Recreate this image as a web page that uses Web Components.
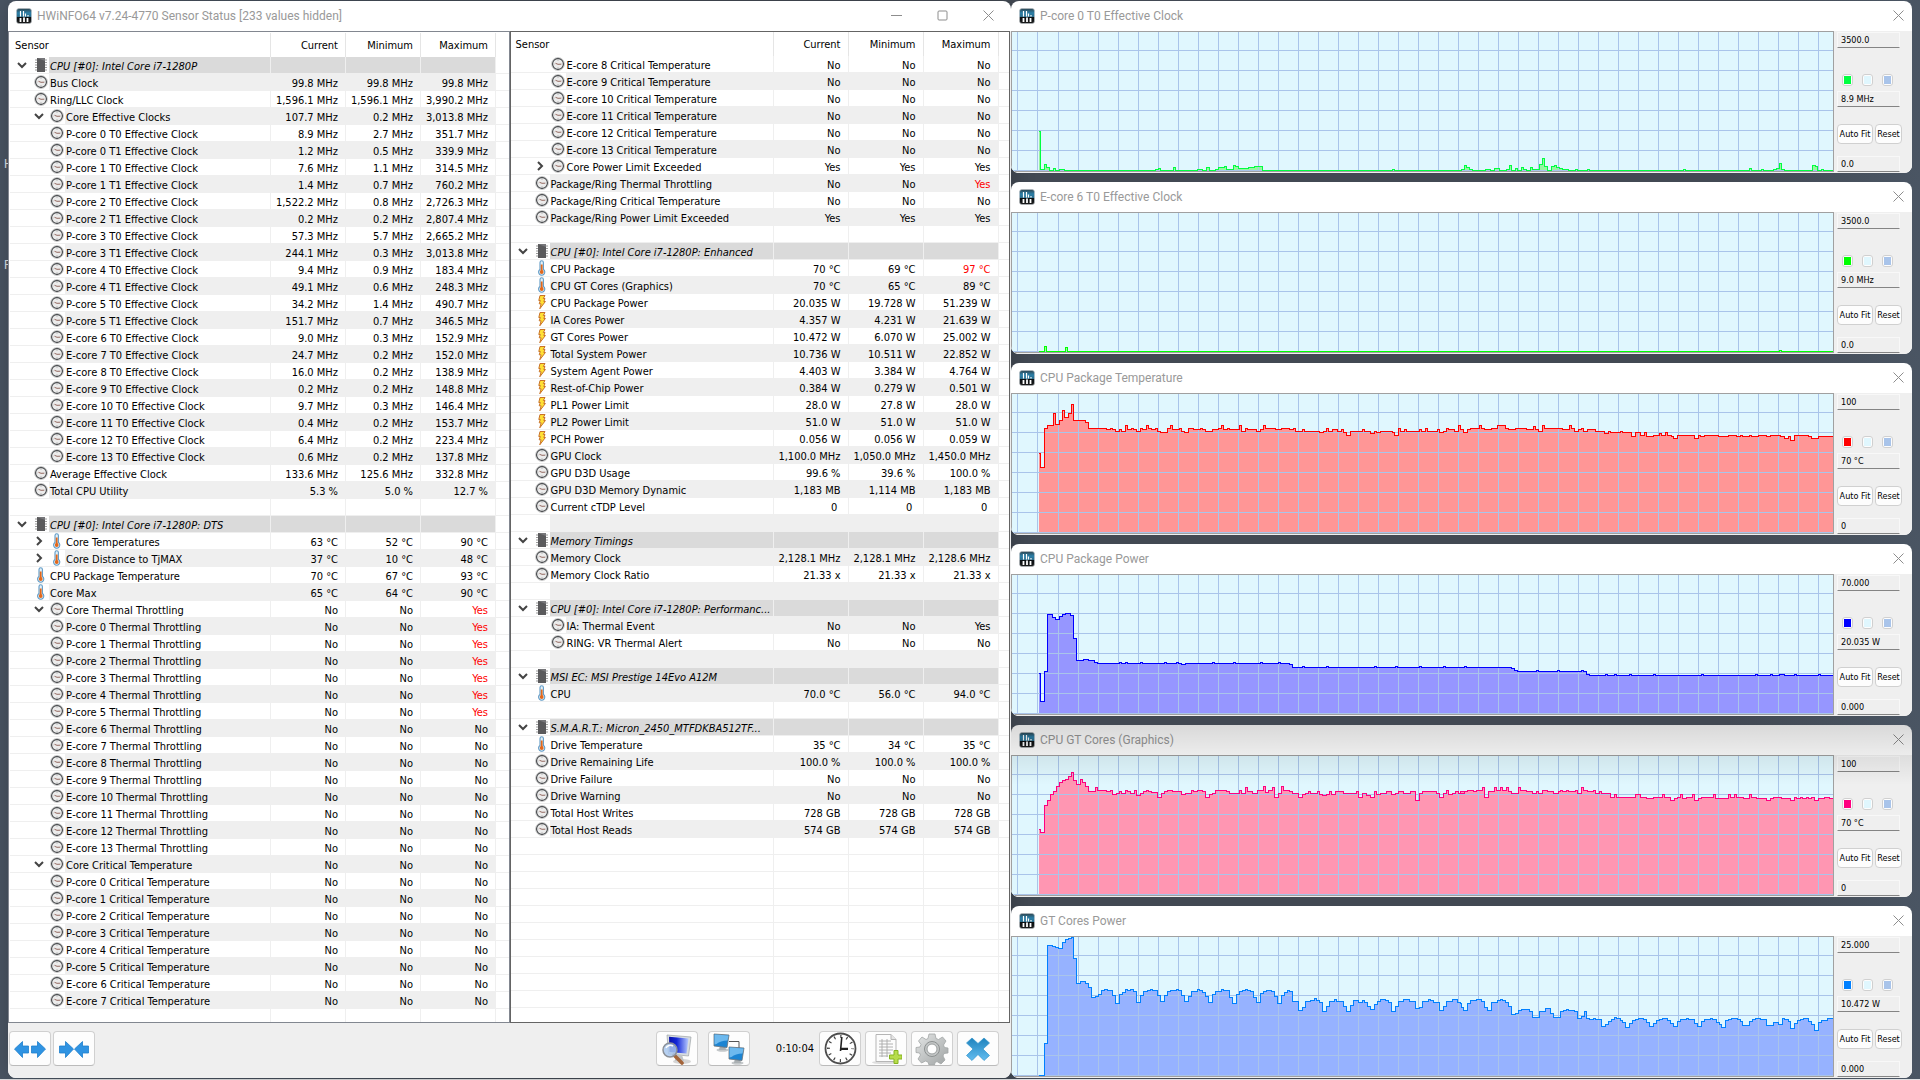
<!DOCTYPE html>
<html lang="en">
<head>
<meta charset="utf-8">
<title>HWiNFO64 Sensor Status</title>
<style>
  body { margin: 0; height: 100vh; display: flex; background: #46505c; }
  desktop-view { flex: 1; }
</style>
</head>
<body>
<desktop-view></desktop-view>

<script>
/* ---------- shared drawings ---------- */
const LOGO = `<svg width="16" height="16" viewBox="0 0 16 16" aria-hidden="true">
  <defs><linearGradient id="g" x1="0" y1="0" x2="0" y2="1"><stop offset="0" stop-color="#2f444e"/><stop offset=".3" stop-color="#2b7fa8"/><stop offset=".55" stop-color="#2b6d8c"/><stop offset=".58" stop-color="#0a0f12"/><stop offset="1" stop-color="#1c1c1c"/></linearGradient></defs>
  <rect x=".5" y=".5" width="15" height="15" rx="2.5" fill="url(#g)" stroke="#b9c0c4" stroke-width=".6"/>
  <path d="M4.500 3v5.500M7.500 3v5.500M9.500 5.500v3M12 7v1.500" stroke="#fff" stroke-width="1.200"/>
  <path d="M4.500 10v4M8 9.500v4.500M11.500 10v4" stroke="#fff" stroke-width="1.800"/></svg>`;

const ICONS = {
  clock: `<svg width="14" height="14" viewBox="0 0 14 14"><circle cx="7" cy="7" r="5.500" fill="#ececec" stroke="#4a4d50" stroke-width="1.300"/><circle cx="7" cy="7" r="6.500" fill="none" stroke="#bdbdbd" stroke-width=".7"/><path d="M4.500 6.300L7 7.300L10.200 7.200" fill="none" stroke="#8a5a50" stroke-width=".9"/><path d="M7 3v1M7 10v1M3 7h.6M10.500 7h.6" stroke="#aaa" stroke-width=".7"/></svg>`,
  temp: `<svg width="14" height="16" viewBox="0 0 14 16"><path d="M5 2.500a1.700 1.700 0 0 1 3.400 0v7a3.100 3.100 0 1 1-3.400 0z" fill="#e3f0f8" stroke="#5f9ac6" stroke-width="1.100"/><path d="M6.700 4.500v7" stroke="#e2681c" stroke-width="1.800"/><circle cx="6.700" cy="12" r="1.900" fill="#e2681c"/></svg>`,
  power: `<svg width="14" height="16" viewBox="0 0 14 16"><path d="M5 1.500h5l-1.700 3H10L8.800 7.500h1.600L4.800 14.800l1.300-5H4.200L5.300 6.500H3.800z" fill="#ffe034" stroke="#c9722a" stroke-width="1"/></svg>`,
  chip: `<svg width="14" height="16" viewBox="0 0 14 16"><path d="M1 3h12M1 5.500h12M1 8h12M1 10.500h12M1 13h12" stroke="#9a9a9a" stroke-width="1"/><rect x="3" y="1" width="8" height="14" fill="#5a5a5c"/><path d="M3 1h8v3z" fill="#77777a"/></svg>`,
  open: `<svg width="10" height="8" viewBox="0 0 10 8"><path d="M1 2l4 4 4-4" fill="none" stroke="#444" stroke-width="2"/></svg>`,
  shut: `<svg width="10" height="10" viewBox="0 0 10 10"><path d="M3 1l4 4-4 4" fill="none" stroke="#444" stroke-width="2"/></svg>`
};

/* ---------- sensor rows: kind|label|current|minimum|maximum
   kind: H group header, 1 item, 2 nested item, O open group, S shut group, - spacer;
   followed by the icon letter c(lock) t(emp) p(ower).  "!" marks an alarm value. ---------- */
const ICON_OF = { c: 'clock', t: 'temp', p: 'power' };
const M = (label, c, mi, ma) => `2c|${label} Effective Clock|${c} MHz|${mi} MHz|${ma} MHz`;
const LEFT = [
  'H|CPU [#0]: Intel Core i7-1280P',
  '1c|Bus Clock|99.8 MHz|99.8 MHz|99.8 MHz',
  '1c|Ring/LLC Clock|1,596.1 MHz|1,596.1 MHz|3,990.2 MHz',
  'Oc|Core Effective Clocks|107.7 MHz|0.2 MHz|3,013.8 MHz',
  M('P-core 0 T0', '8.9', '2.7', '351.7'), M('P-core 0 T1', '1.2', '0.5', '339.9'),
  M('P-core 1 T0', '7.6', '1.1', '314.5'), M('P-core 1 T1', '1.4', '0.7', '760.2'),
  M('P-core 2 T0', '1,522.2', '0.8', '2,726.3'), M('P-core 2 T1', '0.2', '0.2', '2,807.4'),
  M('P-core 3 T0', '57.3', '5.7', '2,665.2'), M('P-core 3 T1', '244.1', '0.3', '3,013.8'),
  M('P-core 4 T0', '9.4', '0.9', '183.4'), M('P-core 4 T1', '49.1', '0.6', '248.3'),
  M('P-core 5 T0', '34.2', '1.4', '490.7'), M('P-core 5 T1', '151.7', '0.7', '346.5'),
  M('E-core 6 T0', '9.0', '0.3', '152.9'), M('E-core 7 T0', '24.7', '0.2', '152.0'),
  M('E-core 8 T0', '16.0', '0.2', '138.9'), M('E-core 9 T0', '0.2', '0.2', '148.8'),
  M('E-core 10 T0', '9.7', '0.3', '146.4'), M('E-core 11 T0', '0.4', '0.2', '153.7'),
  M('E-core 12 T0', '6.4', '0.2', '223.4'), M('E-core 13 T0', '0.6', '0.2', '137.8'),
  '1c|Average Effective Clock|133.6 MHz|125.6 MHz|332.8 MHz',
  '1c|Total CPU Utility|5.3 %|5.0 %|12.7 %',
  '-',
  'H|CPU [#0]: Intel Core i7-1280P: DTS',
  'St|Core Temperatures|63 °C|52 °C|90 °C',
  'St|Core Distance to TjMAX|37 °C|10 °C|48 °C',
  '1t|CPU Package Temperature|70 °C|67 °C|93 °C',
  '1t|Core Max|65 °C|64 °C|90 °C',
  'Oc|Core Thermal Throttling|No|No|!Yes',
  ...[0, 1, 2, 3, 4, 5].map(n => `2c|P-core ${n} Thermal Throttling|No|No|!Yes`),
  ...[6, 7, 8, 9, 10, 11, 12, 13].map(n => `2c|E-core ${n} Thermal Throttling|No|No|No`),
  'Oc|Core Critical Temperature|No|No|No',
  ...[0, 1, 2, 3, 4, 5].map(n => `2c|P-core ${n} Critical Temperature|No|No|No`),
  ...[6, 7].map(n => `2c|E-core ${n} Critical Temperature|No|No|No`)
];
const RIGHT = [
  ...[8, 9, 10, 11, 12, 13].map(n => `2c|E-core ${n} Critical Temperature|No|No|No`),
  'Sc|Core Power Limit Exceeded|Yes|Yes|Yes',
  '1c|Package/Ring Thermal Throttling|No|No|!Yes',
  '1c|Package/Ring Critical Temperature|No|No|No',
  '1c|Package/Ring Power Limit Exceeded|Yes|Yes|Yes',
  '-',
  'H|CPU [#0]: Intel Core i7-1280P: Enhanced',
  '1t|CPU Package|70 °C|69 °C|!97 °C',
  '1t|CPU GT Cores (Graphics)|70 °C|65 °C|89 °C',
  '1p|CPU Package Power|20.035 W|19.728 W|51.239 W',
  '1p|IA Cores Power|4.357 W|4.231 W|21.639 W',
  '1p|GT Cores Power|10.472 W|6.070 W|25.002 W',
  '1p|Total System Power|10.736 W|10.511 W|22.852 W',
  '1p|System Agent Power|4.403 W|3.384 W|4.764 W',
  '1p|Rest-of-Chip Power|0.384 W|0.279 W|0.501 W',
  '1p|PL1 Power Limit|28.0 W|27.8 W|28.0 W',
  '1p|PL2 Power Limit|51.0 W|51.0 W|51.0 W',
  '1p|PCH Power|0.056 W|0.056 W|0.059 W',
  '1c|GPU Clock|1,100.0 MHz|1,050.0 MHz|1,450.0 MHz',
  '1c|GPU D3D Usage|99.6 %|39.6 %|100.0 %',
  '1c|GPU D3D Memory Dynamic|1,183 MB|1,114 MB|1,183 MB',
  '1c|Current cTDP Level|0&nbsp;|0&nbsp;|0&nbsp;',
  '-',
  'H|Memory Timings',
  '1c|Memory Clock|2,128.1 MHz|2,128.1 MHz|2,128.6 MHz',
  '1c|Memory Clock Ratio|21.33 x|21.33 x|21.33 x',
  '-',
  'H|CPU [#0]: Intel Core i7-1280P: Performanc...',
  '2c|IA: Thermal Event|No|No|Yes',
  '2c|RING: VR Thermal Alert|No|No|No',
  '-',
  'H|MSI EC: MSI Prestige 14Evo A12M',
  '1t|CPU|70.0 °C|56.0 °C|94.0 °C',
  '-',
  'H|S.M.A.R.T.: Micron_2450_MTFDKBA512TF...',
  '1t|Drive Temperature|35 °C|34 °C|35 °C',
  '1c|Drive Remaining Life|100.0 %|100.0 %|100.0 %',
  '1c|Drive Failure|No|No|No',
  '1c|Drive Warning|No|No|No',
  '1c|Total Host Writes|728 GB|728 GB|728 GB',
  '1c|Total Host Reads|574 GB|574 GB|574 GB'
];

/* ---------- graphs ----------
   A trace is a list of "x,y" steps, three units to the pixel, in two pages;
   page two starts PAGE units after page one. "top" is the y of the plot's top edge. */
const PAGE = 1350;
const GRAPHS = [
  { title: 'P-core 0 T0 Effective Clock', max: '3500.0', now: '8.9 MHz', min: '0.0', color: '#00ff40', fill: '#96f5a0', top: 96,
    a: '84,394 92,508 103,493 110,502 119,511 130,505 137,511 147,508 164,511 436,508 445,505 452,511 489,502 497,511 562,508 577,511 589,502 597,511 616,508 625,502 643,499 650,508 670,496 677,499 685,505 715,502 733,499 758,511 1146,508 1154,511',
    b: '3,508 13,496 20,502 28,508 38,511 76,508 92,511 102,505 119,511 138,508 148,496 155,511 166,505 173,511 184,502 191,508 200,511 211,502 218,508 238,493 247,475 254,499 262,511 274,499 283,496 290,502 299,505 308,508 326,511 346,508 353,511 382,508 389,511 669,508 677,511 868,505 875,511 904,508 911,511 940,508 949,505 957,490 965,508 974,511 1057,496 1065,499 1073,511 1083,508 1091,511' },
  { title: 'E-core 6 T0 Effective Clock', max: '3500.0', now: '9.0 MHz', min: '0.0', color: '#00ff00', fill: '#96ff96', top: 639,
    a: '84,1054 103,1039 110,1054 166,1042 173,1054', b: '958,1051 965,1054' },
  { title: 'CPU Package Temperature', max: '100', now: '70 °C', min: '0', color: '#ff0000', fill: '#ff9696', top: 102,
    a: '84,280 92,322 103,205 112,196 130,160 137,193 148,181 157,151 164,172 175,160 184,133 190,181 226,187 235,205 289,208 301,205 307,208 316,214 328,208 334,214 346,196 353,208 364,205 370,208 379,214 391,205 397,208 409,196 415,205 424,208 436,205 442,214 451,217 472,205 481,196 488,208 508,205 514,214 523,217 535,205 550,208 571,205 577,208 586,214 607,208 625,205 634,196 641,208 652,205 658,208 688,196 694,214 706,205 712,208 739,214 751,208 760,196 767,205 796,208 814,205 838,208 850,205 857,214 877,208 883,214 928,217 940,214 949,205 956,214 967,208 983,214 994,208 1001,217 1009,226 1021,214 1057,208 1064,214 1081,220 1093,214 1099,217 1111,214 1148,217 1153,226 1165,205 1171,214 1183,208 1190,214 1228,208 1235,214 1246,205 1253,214 1282,208 1288,217 1300,214 1309,205 1316,208 1333,214 1345,196',
    b: '2,208 10,217 22,208 31,205 58,196 65,205 73,208 95,205 112,196 137,205 146,208 166,205 200,208 220,199 227,208 235,214 247,196 254,205 307,208 328,196 335,205 343,214 355,208 364,205 371,214 382,208 406,214 433,220 445,214 451,217 481,214 487,217 515,229 527,217 541,226 553,217 560,229 581,226 598,220 604,226 616,217 623,226 634,229 641,235 652,226 703,235 715,226 721,229 733,226 776,229 806,226 829,229 841,226 847,229 868,226 874,229 895,226 919,229 931,226 961,229 973,235 985,229 991,241 1003,226 1046,229 1055,235 1076,229' },
  { title: 'CPU Package Power', max: '70.000', now: '20.035 W', min: '0.000', color: '#0000ff', fill: '#9696ff', top: 645,
    a: '84,940 92,1024 103,934 112,763 127,772 136,778 148,769 157,763 166,760 181,766 190,835 199,901 220,898 235,901 253,907 262,910 328,907 335,910 346,907 353,910 391,907 397,910 463,907 469,910 499,907 505,910 514,913 526,910 607,907 613,910 670,907 676,910 751,907 757,910 805,907 811,910 838,913 847,922 877,919 883,922 949,919 955,922 1093,919 1099,922 1156,919 1162,922 1228,919 1234,922 1300,919 1306,922',
    b: '13,919 19,922 155,925 164,931 173,934 229,931 235,934 292,931 298,934 364,931 370,934 379,943 388,946 436,943 442,946 463,943 469,946 508,943 514,946 580,943 586,946 724,943 730,946 886,943 892,946 931,943 937,946 958,943 973,946 1003,943 1009,946 1075,943 1081,946' },
  { title: 'CPU GT Cores (Graphics)', max: '100', now: '70 °C', min: '0', color: '#ff0080', fill: '#ff96b2', top: 108, shaded: true,
    a: '84,328 92,337 103,256 112,241 121,223 130,214 139,199 148,187 157,181 166,178 175,169 184,157 191,181 200,193 211,178 218,187 226,199 235,214 256,202 263,211 289,214 301,211 307,223 319,220 328,214 334,220 346,211 353,214 361,220 373,211 380,226 391,220 400,214 409,211 415,214 424,217 442,232 454,220 463,214 472,211 487,214 514,223 526,220 544,211 550,214 562,211 577,214 586,232 598,223 607,220 616,211 649,214 658,220 688,211 694,220 706,202 713,214 727,220 742,211 760,199 767,217 776,211 787,202 794,232 805,220 814,199 821,211 838,214 847,220 865,232 877,223 886,220 895,214 901,220 922,214 928,223 937,226 949,223 958,214 964,223 976,214 1000,220 1039,214 1045,232 1057,220 1069,226 1081,232 1093,214 1099,223 1111,220 1129,214 1144,223 1156,220 1165,214 1180,220 1201,214 1216,241 1228,220 1237,214 1279,220 1288,232 1300,220 1309,211 1315,223 1327,220 1336,214 1345,220 1363,214',
    b: '0,220 13,214 22,211 40,214 49,211 67,202 74,232 86,214 103,202 110,211 121,202 128,211 139,202 146,214 155,220 175,202 182,211 200,214 218,220 229,214 235,220 247,211 263,214 280,220 295,214 301,211 307,214 319,211 325,214 346,211 353,220 364,202 371,211 382,214 400,211 406,220 418,214 424,220 451,232 463,223 469,232 526,223 541,232 559,235 580,232 607,223 613,232 631,241 643,235 652,232 661,223 668,235 679,232 697,223 704,241 715,235 724,232 760,223 767,235 805,223 812,232 823,223 829,232 850,235 868,223 875,232 889,235 919,241 931,235 940,232 964,235 991,241 1003,232 1010,235 1021,232 1027,235 1039,232 1045,235 1054,232 1063,241 1075,235 1093,232 1108,235' },
  { title: 'GT Cores Power', max: '25.000', now: '10.472 W', min: '0.000', color: '#0080ff', fill: '#96b2ff', top: 651,
    a: '84,1066 103,970 112,676 127,679 136,682 145,685 157,667 166,658 175,655 184,652 190,715 199,790 211,784 226,790 235,802 244,832 256,829 265,823 274,811 283,808 292,811 307,826 316,850 328,823 337,817 346,808 352,811 361,808 370,814 379,847 391,826 400,814 412,811 421,808 427,811 442,826 451,844 463,826 472,814 481,811 499,808 505,811 514,826 523,844 535,829 544,814 562,808 569,811 577,817 586,829 595,847 607,823 616,814 634,808 640,811 658,832 667,850 679,823 688,814 697,811 706,808 712,811 721,814 730,832 739,847 751,820 760,814 769,811 784,814 793,829 802,850 814,826 823,817 832,811 838,814 847,844 865,871 877,862 886,844 901,841 913,835 919,841 928,847 937,874 949,859 958,844 973,838 979,844 1000,859 1009,874 1021,856 1030,841 1045,847 1057,841 1063,847 1072,859 1081,868 1093,853 1102,844 1111,838 1126,841 1135,847 1144,874 1156,859 1165,844 1180,838 1198,844 1216,865 1228,862 1237,844 1255,838 1261,841 1270,847 1288,871 1300,859 1309,844 1327,838 1342,847',
    b: '0,850 4,862 10,871 22,850 31,841 49,838 65,844 73,862 82,871 94,847 112,841 121,838 128,841 137,847 146,859 155,883 166,880 175,871 184,868 209,874 218,892 238,874 256,865 271,880 281,892 301,874 310,871 319,868 325,871 343,874 352,895 365,889 373,874 379,895 388,898 400,895 406,898 424,919 436,913 445,904 454,898 463,892 469,895 481,901 487,907 496,922 508,910 517,901 526,898 535,895 550,898 559,907 568,919 580,910 589,901 598,898 607,895 622,901 631,910 640,919 652,904 661,898 679,895 685,898 703,910 712,919 724,904 733,898 751,895 757,898 769,907 778,913 784,922 796,901 805,898 814,895 832,898 841,904 847,916 868,904 877,898 886,895 901,898 919,916 940,907 955,913 967,895 973,898 985,904 991,925 1003,910 1012,901 1021,898 1030,895 1045,904 1054,913 1063,931 1075,907 1084,901 1102,895' }
];

const UI_FONT = '"DejaVu Sans Condensed", "DejaVu Sans", sans-serif';
const TITLE_FONT = 'Roboto, "Noto Sans", sans-serif';

class BaseElement extends HTMLElement {
  render(css, html) {
    const t = document.createElement('template');
    t.innerHTML = `<style>*{box-sizing:border-box}:host{box-sizing:border-box}${css}</style>${html}`;
    this.attachShadow({ mode: 'open' }).append(t.content.cloneNode(true));
  }
}

/* A window: title bar, optional minimise/maximise buttons, slotted body */
customElements.define('app-window', class extends BaseElement {
  connectedCallback() {
    const extra = this.hasAttribute('resizable') ? `
      <button aria-label="Minimise"><svg width="11" height="11" viewBox="0 0 11 11"><path d="M0 5.500h11"/></svg></button>
      <button aria-label="Maximise"><svg width="11" height="11" viewBox="0 0 11 11"><rect x="1" y="1" width="9" height="9" rx="1"/></svg></button>` : '';
    this.render(`
      :host{display:flex;flex-direction:column;min-width:0;min-height:0;border-radius:8px;overflow:hidden;background:#fff;font:12px/16px ${TITLE_FONT}}
      header{flex:none;display:flex;align-items:center;height:30px;padding-left:8px}
      h1{flex:1;margin:0 0 0 5px;font:inherit;color:#999;white-space:nowrap}
      button{width:46px;height:28px;margin-bottom:2px;padding:0;border:0;background:none;display:grid;place-items:center}
      :host(:not([resizable])) button{width:28px}
      button svg{fill:none;stroke:#8d8d8d}
      main{flex:1;display:flex;min-height:0;min-width:0}
    `, `<header>${LOGO}<h1>${this.getAttribute('heading')}</h1>${extra}
        <button aria-label="Close"><svg width="11" height="11" viewBox="0 0 11 11"><path d="M.5 .5l10 10M10.500 .5l-10 10"/></svg></button></header>
        <main><slot></slot></main>`);
  }
});

/* One pane of sensor rows */
customElements.define('sensor-list', class extends BaseElement {
  connectedCallback() {
    const rows = (this.getAttribute('source') === 'left' ? LEFT : RIGHT).map((r, i) => {
      const [kind, label = '', ...vals] = r.split('|');
      const k = kind[0];
      const tone = k === 'H' ? 'head' : i % 2 ? 'odd' : '';
      if (k === '-') return `<tr class="${tone}"><td><div class="cell"><i class="lead l1"></i><span></span></div></td><td></td><td></td><td></td><td class="end"></td></tr>`;
      const lvl = k === 'H' ? 'l0' : k === '1' ? 'l1' : k === '2' ? 'l3' : 'l2';
      const chev = k === 'H' || k === 'O' ? ICONS.open : k === 'S' ? ICONS.shut : '';
      const icon = k === 'H' ? ICONS.chip : ICONS[ICON_OF[kind[1]]];
      const v = (vals.length ? vals : ['', '', '']).map(x => x[0] === '!' ? `<td class="alarm">${x.slice(1)}</td>` : `<td>${x}</td>`).join('');
      return `<tr class="${tone}"><td><div class="cell"><i class="lead ${lvl}"><b>${chev}</b>${icon}</i><span>${label}</span></div></td>${v}<td class="end"></td></tr>`;
    });
    while (rows.length < 57) rows.push('<tr><td></td><td></td><td></td><td></td><td class="end"></td></tr>');
    this.render(`
      :host{display:block;flex:1;min-width:0;overflow:hidden;background:#fff;border:1px solid #828790;padding:1px 0 0 1px;color:#000;font:11px/13px ${UI_FONT}}
      :host([source=right]){border-color:#646464;padding:0}
      table{width:100%;table-layout:fixed;border-collapse:separate;border-spacing:0}
      col.name{width:${this.getAttribute('name-width')}px} col.val{width:75px}
      th{height:24px;padding:1px 7px 0 6px;font-weight:400;text-align:right;border-right:1px solid #e5e5e5}
      th:first-child{text-align:left;padding-left:5px}
      th:last-child{border:0}
      td{height:17px;padding:3px 7px 0 0;vertical-align:top;text-align:right;white-space:nowrap;border-right:1px solid #efefef;border-bottom:1px solid #efefef}
      td:first-child{padding:0}
      td.end{border-right:0;padding:0}
      .cell{display:flex;height:16px;text-align:left}
      .lead{flex:none;display:flex;justify-content:flex-end;align-items:center;background:#fff}
      .lead b{flex:1;display:flex;padding-left:7px}
      .l0,.l1{width:39px} .l2,.l3{width:55px}
      .l2 b{padding-left:24px}
      .lead>svg{margin-right:1px}
      .cell span{flex:1;padding:3px 0 0 1px;overflow:hidden}
      .odd .cell span,.odd td:not(.end):not(:first-child){background:#efefef}
      .head .cell span,.head td:not(.end):not(:first-child){background:#dadada}
      .head .cell span{font-style:italic}
      .alarm{color:#f00}
    `, `<table><colgroup><col class="name"><col class="val"><col class="val"><col class="val"><col></colgroup>
        <thead><tr><th>Sensor</th><th>Current</th><th>Minimum</th><th>Maximum</th><th></th></tr></thead>
        <tbody>${rows.join('')}</tbody></table>`);
  }
});

/* Toolbar under the sensor lists */
const TOOLS = {
  expand: `<svg width="34" height="22" viewBox="0 0 34 22"><g fill="#2f93e2" stroke="#1d7fcd" stroke-width=".8"><path d="M1.500 11l8-7.500v4.500h6v7h-6v4.500z"/><path d="M32.500 11l-8-7.500v4.500h-6v7h6v4.500z"/></g></svg>`,
  collapse: `<svg width="34" height="22" viewBox="0 0 34 22"><g fill="#2f93e2" stroke="#1d7fcd" stroke-width=".8"><path d="M16.500 11l-8-7.500v4.500h-6v7h6v4.500z"/><path d="M17.500 11l8-7.500v4.500h6v7h-6v4.500z"/></g></svg>`,
  inspect: `<svg width="32" height="32" viewBox="0 0 32 32"><defs><linearGradient id="s" x1="0" x2="1"><stop offset="0" stop-color="#0a12a8"/><stop offset=".4" stop-color="#1428d8"/><stop offset="1" stop-color="#b8ccff"/></linearGradient></defs><ellipse cx="21" cy="28.500" rx="9" ry="2.500" fill="#d5d5d5"/><path d="M6 2l24 2-2.500 19-20-2z" fill="#d8dde0" stroke="#9da3a6" stroke-width=".7"/><path d="M8 3.800l19.500 1.600-2 15-17-1.500z" fill="url(#s)"/><path d="M14 22h7l2 6h-9z" fill="#c0c4c6"/><path d="M13 22l8 8" stroke="#a3643a" stroke-width="3.600" stroke-linecap="round"/><circle cx="9" cy="17" r="7" fill="#a9c8ee" fill-opacity=".85" stroke="#8b9097" stroke-width="1.500"/><path d="M5 15a5 5 0 0 1 7-2" fill="none" stroke="#fff" stroke-width="1.500"/></svg>`,
  network: `<svg width="34" height="32" viewBox="0 0 34 32"><path d="M17 8.500h10v9" fill="none" stroke="#555" stroke-width="1"/><g><ellipse cx="10.500" cy="17" rx="6" ry="1.800" fill="#c4c8ca"/><path d="M8 12h5l1 5H7z" fill="#aab0b3"/><path d="M2 1l15 1-2 12.500-13-1.500z" fill="#1c84d2" stroke="#6d7478" stroke-width=".8"/><path d="M2.500 1.500l14 1-1 5q-7 0-11 3.500l-2 .5z" fill="#6db9ee"/></g><g transform="translate(15 13)"><ellipse cx="10.500" cy="17" rx="6" ry="1.800" fill="#c4c8ca"/><path d="M8 12h5l1 5H7z" fill="#aab0b3"/><path d="M2 1l15 1-2 12.500-13-1.500z" fill="#1c84d2" stroke="#6d7478" stroke-width=".8"/><path d="M2.500 1.500l14 1-1 5q-7 0-11 3.500l-2 .5z" fill="#6db9ee"/></g></svg>`,
  time: `<svg width="33" height="33" viewBox="0 0 33 33"><circle cx="16.500" cy="16.500" r="15" fill="#fff" stroke="#4d4d4d" stroke-width="1.800"/><circle cx="16.500" cy="16.500" r="12" fill="none" stroke="#444" stroke-width="3" stroke-dasharray="1.200 5.083" stroke-dashoffset=".6"/><path d="M16.500 19L17.800 5" stroke="#222" stroke-width="1.600"/><path d="M16 16.800h8" stroke="#222" stroke-width="2.200"/></svg>`,
  log: `<svg width="32" height="32" viewBox="0 0 32 32"><ellipse cx="15" cy="29.500" rx="13" ry="1.600" fill="#ddd"/><path d="M6 1.500h15l5 5v22H6z" fill="#fcfcfc" stroke="#b5b5b5"/><path d="M21 1.500v5h5" fill="#e4e4e4" stroke="#b5b5b5"/><path d="M9 8h12M9 11h14M9 14h14M9 17h14M9 20h12M9 23h9M12 6v18M17 6v18" stroke="#a9a9a9" stroke-width=".9"/><path d="M24 17.500h4v4.500h4v4h-4v4.500h-4V26h-4.500v-4H24z" fill="#b7dc4c" stroke="#86b420"/></svg>`,
  settings: `<svg width="34" height="32" viewBox="0 0 34 32"><defs><linearGradient id="e" x1="0" y1="0" x2="1" y2="1"><stop offset="0" stop-color="#e4e6e6"/><stop offset="1" stop-color="#9fa3a3"/></linearGradient></defs><path d="M14 1h6l1 4.500 2.500 1L27.500 4 31 8l-2.500 4 1 2.500 3.500.5v5l-4 .5-1 2.500 2 4-4 4-4-2.500-2 1-.5 2.500h-5.500l-1-3-2.500-1-4 2-3.500-4L5.500 22 4.500 20 1 19.500v-5L5 14l1-2.500L3.500 8 7 4l4 2.500 2-1z" fill="url(#e)" stroke="#a2a6a6" stroke-width=".8"/><circle cx="17" cy="16" r="7.500" fill="#c3c6c6" stroke="#8d9191"/><circle cx="17" cy="16" r="5" fill="#fff" stroke="#9a9e9e"/></svg>`,
  close: `<svg width="26" height="26" viewBox="0 0 26 26"><defs><linearGradient id="x" x1="0" y1="0" x2="0" y2="1"><stop offset="0" stop-color="#1f83bd"/><stop offset="1" stop-color="#63bdf0"/></linearGradient></defs><path d="M7 2l6 5.500L19 2l5.500 5-6.500 6 6.500 6.500-5.500 5-6-6-6 6-5.500-5L8 13 1.500 7z" fill="url(#x)" stroke="#2f93cc" stroke-width=".7" stroke-linejoin="round"/></svg>`
};
customElements.define('tool-bar', class extends BaseElement {
  connectedCallback() {
    const b = (name, label) => `<button aria-label="${label}">${TOOLS[name]}</button>`;
    this.render(`
      :host{flex:none;display:flex;align-items:center;justify-content:space-between;height:55px;padding:0 12px 4px 1px;background:#efefef;font:11px/16px ${UI_FONT};color:#000}
      div{display:flex;align-items:center;gap:4px}
      .columns{gap:2px}
      .pair{gap:10px;margin-right:22px}
      time{margin-right:1px}
      button{width:42px;height:35px;padding:0;display:grid;place-items:center;overflow:hidden;background:#fdfdfd;border:1px solid #d0d0d0;border-bottom-color:#bbb;border-radius:4px}
    `, `<div class="columns">${b('expand', 'Expand columns')}${b('collapse', 'Collapse columns')}</div>
        <div><div class="pair">${b('inspect', 'System summary')}${b('network', 'Remote monitoring')}</div>
        <time>0:10:04</time>${b('time', 'Reset time')}${b('log', 'Start logging')}${b('settings', 'Settings')}${b('close', 'Close sensors')}</div>`);
  }
});

/* The plot of one sensor over time */
customElements.define('trace-plot', class extends BaseElement {
  connectedCallback() {
    const g = GRAPHS[this.getAttribute('index')];
    const read = (s, dx) => s.split(' ').map(p => p.split(',').map(Number)).map(([x, y]) =>
      [Math.floor((x + dx - 6) / 3) + .5, Math.floor((y - g.top) / 3) + .5]);
    const pts = [...read(g.a, 0), ...read(g.b, PAGE)];
    const BASE = 138, END = 4000;
    let d = `M${pts[0][0]} ${pts[0][1]}`;
    for (let i = 1; i < pts.length; i++) d += `H${pts[i][0]}V${pts[i][1]}`;
    d += `H${END}`;
    const cell = (id, x) => `<pattern id="${id}" x="${x}" y="-2" width="20" height="20" patternUnits="userSpaceOnUse"><path d="M0 .5H20M.5 0V20" stroke="#a9c4ea" fill="none"/></pattern>`;
    this.render(`
      :host{display:flex;flex:1;min-width:0;overflow:hidden;border:1px solid #a0a0a0;background:#e0f7fe}
      svg{display:block;flex:1;width:100%;height:0;min-height:100%}
    `, `<svg role="img" aria-label="${g.title} over time">
        <defs>${cell('lead', 5)}${cell('grid', 6)}</defs>
        <path d="${d}V${BASE + 1}H${pts[0][0]}Z" fill="${g.fill}" shape-rendering="crispEdges"/>
        <rect width="30" height="100%" fill="url(#lead)"/>
        <rect x="30" width="100%" height="100%" fill="url(#grid)"/>
        <path d="${d}" fill="none" stroke="${g.color}" shape-rendering="crispEdges"/></svg>`);
  }
});

/* Range fields, colour swatches and buttons beside a plot */
customElements.define('graph-controls', class extends BaseElement {
  connectedCallback() {
    const g = GRAPHS[this.getAttribute('index')];
    this.render(`
      :host{flex:none;display:flex;flex-direction:column;width:78px;padding:1px 9px 0 3px;background:#efefef;font:9px/14px ${UI_FONT};color:#000}
      input{flex:none;width:63px;height:16px;padding:0 3px;font:inherit;color:inherit;background:#efefef;border:1px solid #f8f8f8;border-bottom-color:#848484;border-radius:0;outline:0}
      .sw{display:flex;gap:9px;padding:0 0 0 5px;margin:26px 0 5px}
      .sw button{width:11px;height:12px;padding:1px;border:1px solid #d0d0d0;border-radius:3px;background:#fdfdfd}
      .sw button i{display:block;width:100%;height:100%;background:var(--c)}
      .row{display:flex;gap:2px;margin:17px 0 12px}
      .row button{flex:none;width:36px;height:20px;padding:0;font:inherit;color:inherit;text-align:center;white-space:nowrap;overflow:hidden;background:#fdfdfd;border:1px solid #d0d0d0;border-radius:4px}
      .row button+button{width:27px}
    `, `<input aria-label="Upper limit" value="${g.max}">
        <div class="sw"><button aria-label="Line colour" style="--c:${g.color}"><i></i></button><button aria-label="Background colour" style="--c:#e0f7fe"><i></i></button><button aria-label="Grid colour" style="--c:#a9c4ea"><i></i></button></div>
        <input aria-label="Current value" readonly value="${g.now}">
        <div class="row"><button>Auto Fit</button><button>Reset</button></div>
        <input aria-label="Lower limit" value="${g.min}">`);
  }
});

customElements.define('desktop-view', class extends BaseElement {
  connectedCallback() {
    this.render(`
      :host{display:grid;grid-template-columns:minmax(0,1003fr) minmax(0,901fr);grid-template-rows:minmax(0,1fr);padding:1px 8px 1px;position:relative;background:linear-gradient(90deg,#4a5563 0,#424953 30%,#424953 90%,#4a5563 100%);border-bottom:1px solid #dfe0e2}
      .label{position:absolute;left:4px;color:#dfe3e8;font:12px/16px ${TITLE_FONT}}
      .sensors{position:relative;box-shadow:0 0 24px rgba(0,0,0,.22)}
      .body{flex:1;display:flex;flex-direction:column;min-width:0;min-height:0}
      .lists{flex:1;display:flex;min-height:0;padding-right:1px;background:#efefef}
      .graphs{display:flex;flex-direction:column;gap:9px;min-height:0}
      .graphs app-window{flex:1;position:relative}
      .graph{flex:1;display:flex;min-width:0;padding-bottom:1px;background:#efefef}
      .shaded::after{content:"";position:absolute;inset:0;background:linear-gradient(rgba(0,0,0,.15),rgba(0,0,0,0) 60px);pointer-events:none}
    `, `<span class="label" style="top:156px">H</span><span class="label" style="top:257px">P</span>
        <app-window class="sensors" resizable heading="HWiNFO64 v7.24-4770 Sensor Status [233 values hidden]">
          <div class="body"><div class="lists"><sensor-list source="left" name-width="261"></sensor-list><sensor-list source="right" name-width="263"></sensor-list></div><tool-bar></tool-bar></div>
        </app-window>
        <div class="graphs">${GRAPHS.map((g, i) => `<app-window class="${g.shaded ? 'shaded' : ''}" heading="${g.title}"><div class="graph"><trace-plot index="${i}"></trace-plot><graph-controls index="${i}"></graph-controls></div></app-window>`).join('')}</div>`);
  }
});
</script>
</body>
</html>
